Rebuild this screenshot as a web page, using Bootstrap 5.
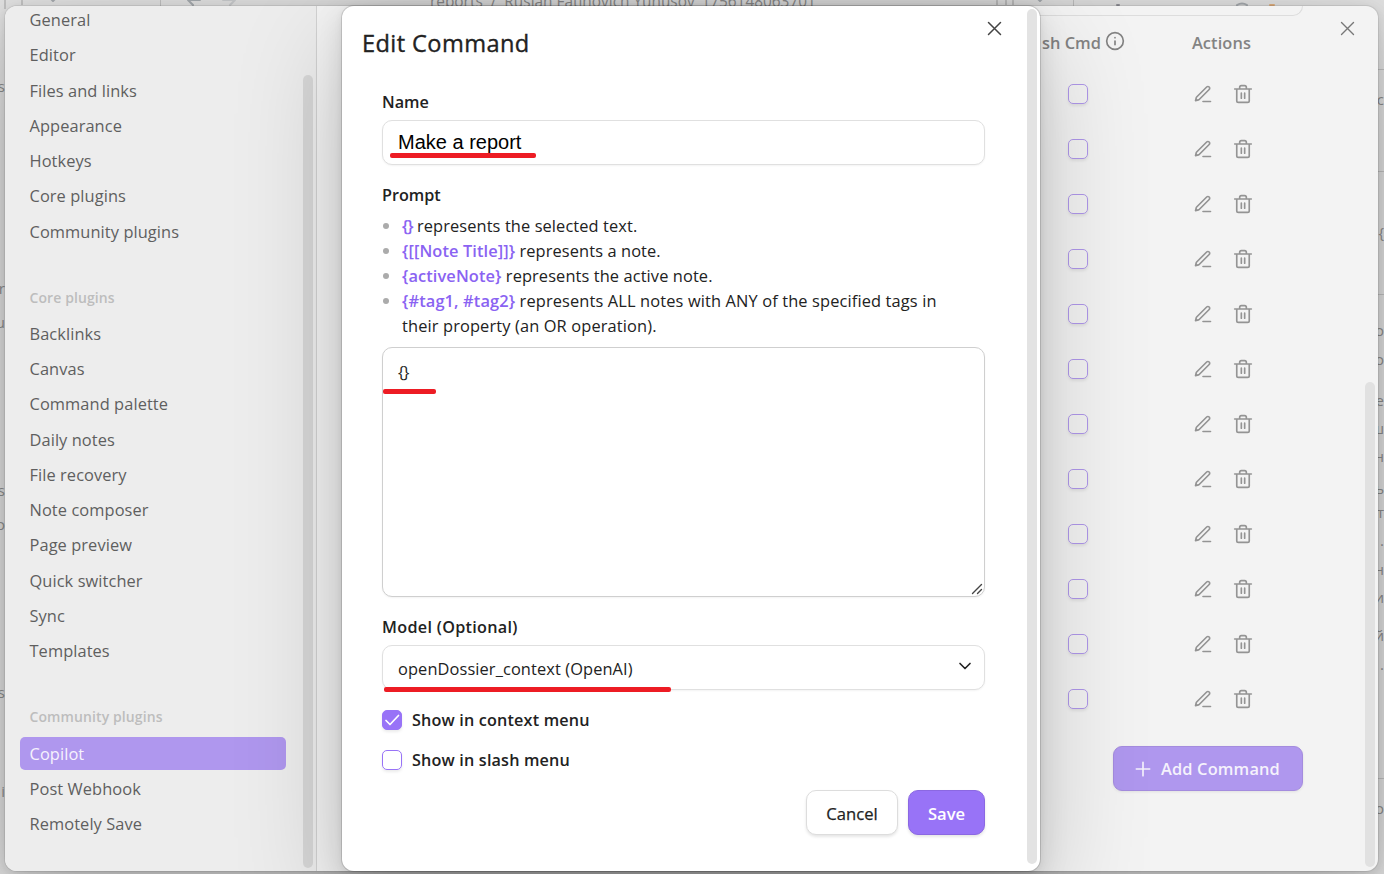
<!DOCTYPE html>
<html lang="en">
<head>
<meta charset="utf-8">
<title>Copilot settings</title>
<link href="https://cdn.jsdelivr.net/npm/bootstrap@5.3.0/dist/css/bootstrap.min.css" rel="stylesheet">
<style>
:root{--accent:#9873f7;--sh:0 2px 9px rgba(0,0,0,.071),0 8px 31px rgba(0,0,0,.112),0 37px 112px rgba(0,0,0,.2)}
body{width:1384px;height:874px;background:#e2e2e2;font-family:"Open Sans","Noto Sans",sans-serif;font-size:16.4px;line-height:25px;color:#222}
svg{display:block;fill:none;stroke:currentColor;stroke-width:2;stroke-linecap:round;stroke-linejoin:round}
.frag{position:absolute;line-height:20px;font-size:15px;color:#8e8e8e;white-space:nowrap;overflow:hidden}
.edge-l{left:0;width:5px;direction:rtl}.edge-r{left:1378px;width:6px;direction:rtl}
.rule{position:absolute;background:#c2c2c2}
.settings{position:absolute;left:5px;top:6px;width:1373px;height:865px;border-radius:12px;background:#f3f3f3;box-shadow:0 0 0 1px rgba(0,0,0,.07),var(--sh)}
.side{width:312px;background:#ededed;border-right:1px solid #d2d2d2;padding:0 30px 0 15px}
.side-list{margin-top:-3px}
.side-item{height:33px;margin-bottom:2.25px;padding:0 9.5px;line-height:33px;border-radius:5px;color:#5f5f5f;letter-spacing:.08px}
.side-item.on{background:#af97ee;color:#f6f2fd}
.side-head{height:67.2px;padding:28px 9.5px 0;line-height:40px;font-size:14px;font-weight:600;color:#bdbdbd;letter-spacing:.1px}
.bar{position:absolute;width:10px;border-radius:5px;background:rgba(0,0,0,.09)}
.cardend{position:absolute;left:1000px;top:0;width:298px;height:10px;border:1px solid #ddd;border-width:0 1px 1px 0;border-radius:0 0 10px 0}
.cmds{padding-left:725px;color:#838383}
.cmd-head{height:60px;padding-top:24px;font-weight:600}
.cmd-row{height:55px}
.cmd-row .box{margin-left:26px}
.cmd-row svg{color:#949494}
.cmd-row .pen{margin-left:105px;margin-right:20px}
.act{margin-left:67px;letter-spacing:.1px}
.box{width:20px;height:20px;border:1px solid var(--accent);border-radius:5px;box-shadow:0 2px 3px rgba(0,0,0,.08)}
.faded{border-color:#af97ea}
.add{width:190px;height:45px;margin:20px 0 0 71px;border-radius:9px;background:#af97ee;border:1px solid #a48cde;color:#f5f2fc;font-weight:600;box-shadow:0 1px 3px rgba(0,0,0,.08);padding:0 14px 0 19px;letter-spacing:.15px}
.edit{position:absolute;left:342px;top:6px;width:698px;height:865px;border-radius:12px;background:#fff;box-shadow:0 0 0 1px rgba(0,0,0,.13),var(--sh);padding:0 55px 0 40px}
.title{font-size:23.6px;font-weight:500;line-height:32px;padding-top:21px;margin:0 0 0 -20px;letter-spacing:.4px;-webkit-text-stroke:.35px #222}
.lbl{font-weight:600;font-size:16.2px;line-height:25px;letter-spacing:0}
.lbl.wide{letter-spacing:.3px}
.cl{margin-left:2px;letter-spacing:.17px}
.field{border:1px solid #e0e0e0;border-radius:10px;padding:0 15px;background:#fff;color:#222;font-size:16.4px;box-shadow:0 1px 2px rgba(0,0,0,.05)}
.name-in{height:45px;font-family:"Liberation Sans",sans-serif;font-size:20px;color:#000;margin-top:6px}
.hints{list-style:none;margin:0;padding:0 0 0 20px}
.hints li{position:relative;letter-spacing:.1px}
.hints li::before{content:"";position:absolute;left:-19px;top:10px;width:6px;height:6px;border-radius:50%;background:#ababab}
.hints b{font-weight:600;color:#8a63f2}
.brace{letter-spacing:-1px}
.area{height:250px;margin-top:9px;padding-top:11px;border-color:#cfcfcf;position:relative}
.model{letter-spacing:.1px;padding-top:1px}
.stroke-red{position:absolute;height:5px;border-radius:2px;background:#ed1c24}
.chk{background:var(--accent);color:#fff}
.btn-x{height:45px;border-radius:10px;border:1px solid #ddd;background:#fff;color:#222;-webkit-text-stroke:.25px #222;box-shadow:0 2px 3px rgba(0,0,0,.1);font-size:16.6px;padding:1px 0 0}
.btn-x.go{background:var(--accent);border-color:#8b68e2;color:#fff;font-weight:600;-webkit-text-stroke:0}
</style>
</head>
<body class="position-relative overflow-hidden">
<div class="rule" style="left:4px;top:0;width:2px;height:9px"></div><div class="rule" style="left:21px;top:0;width:2px;height:5px"></div>
<div class="rule" style="left:160px;top:0;width:1px;height:6px"></div><div class="rule" style="left:996px;top:0;width:2px;height:5px"></div>
<div class="rule" style="left:1005px;top:0;width:2px;height:5px"></div><div class="rule" style="left:1012px;top:0;width:2px;height:5px"></div><div class="rule" style="left:1073px;top:0;width:1px;height:6px"></div>
<svg class="position-absolute text-secondary opacity-50" style="left:0;top:0" width="1384" height="6"><path d="M51-1l2 2 2-2M200 0h-12l5 5M1038-1l2 2 2-2"/><path opacity=".4" d="M223 0h12l-5 5"/><path d="M1237 5q5-3 10 0"/><path d="M1270 5h4" stroke="#e08020"/><path d="M1117 5h2" stroke="#445"/></svg>
<div class="frag" style="left:430px;top:-8px;height:20px;font-size:15.4px">reports&nbsp; /&nbsp; Ruslan Fatihovich Yunusov_1756148063701</div>
<div class="frag edge-l" style="top:76px">s</div><div class="frag edge-l" style="top:278px">r</div><div class="frag edge-l" style="top:312px">u</div><div class="frag edge-l" style="top:480px">s</div><div class="frag edge-l" style="top:514px">o</div><div class="frag edge-l" style="top:682px">s</div><div class="frag edge-l" style="top:781px">i</div>
<div class="frag edge-r" style="top:89px">с</div><div class="frag edge-r" style="top:222px">}</div><div class="frag edge-r" style="top:320px">о</div><div class="frag edge-r" style="top:349px">о</div><div class="frag edge-r" style="top:390px">е</div><div class="frag edge-r" style="top:418px">ш</div><div class="frag edge-r" style="top:446px">н</div><div class="frag edge-r" style="top:478px">ь</div><div class="frag edge-r" style="top:502px">т</div><div class="frag edge-r" style="top:530px">.</div><div class="frag edge-r" style="top:559px">н</div><div class="frag edge-r" style="top:587px">и</div><div class="frag edge-r" style="top:625px">й</div><div class="frag edge-r" style="top:654px">.</div><div class="frag edge-r" style="top:798px">о</div>
<div class="rule" style="left:1378px;top:69px;width:6px;height:1px"></div><div class="rule" style="left:1378px;top:171px;width:6px;height:1px"></div><div class="rule" style="left:1378px;top:294px;width:6px;height:1px"></div><div class="rule" style="left:1378px;top:778px;width:6px;height:1px"></div>

<main class="settings d-flex overflow-hidden">
  <nav class="side flex-shrink-0"><div class="side-list"></div></nav>
  <section class="cmds flex-grow-1">
    <div class="cmd-head d-flex">
      <span>sh Cmd</span>
      <svg class="ms-1" style="margin-top:1px" width="20" height="20" viewBox="0 0 24 24"><circle cx="12" cy="12" r="10"/><path d="M12 16.500v-4.500M12 8h.01"/></svg>
      <span class="act">Actions</span>
    </div>
    <div id="rows"></div>
    <button class="add d-flex align-items-center"><svg width="20" height="20" viewBox="0 0 24 24" stroke-width="1.600"><path d="M4 12h16M12 4v16"/></svg><span class="flex-grow-1 text-center">Add Command</span></button>
  </section>
  <div class="cardend"></div>
  <svg class="position-absolute" style="left:1335px;top:15px;color:#777" width="15" height="15" viewBox="0 0 15 15"><path stroke-width="1.400" d="M1.500 1.500l12 12M13.500 1.500l-12 12"/></svg>
  <div class="bar" style="left:298px;top:69px;height:793px"></div>
  <div class="bar" style="left:1360px;top:376px;height:485px;background:#e1e1e1"></div>
</main>

<section class="edit">
  <h1 class="title">Edit Command</h1>
  <div class="lbl" style="margin-top:30px;padding-top:1px;margin-bottom:-1px">Name</div>
  <div class="field name-in d-flex align-items-center">Make a report</div>
  <div class="lbl" style="margin-top:18px;margin-bottom:5px">Prompt</div>
  <ul class="hints">
    <li><b class="brace">{}</b> represents the selected text.</li>
    <li><b>{[[Note Title]]}</b> represents a note.</li>
    <li><b>{activeNote}</b> represents the active note.</li>
    <li style="letter-spacing:.13px"><b>{#tag1, #tag2}</b> represents ALL notes with ANY of the specified tags in<br>their property (an OR operation).</li>
  </ul>
  <div class="field area"><span class="brace">{}</span><svg class="position-absolute" style="right:1px;bottom:1px;color:#444" width="12" height="12" viewBox="0 0 12 12"><path stroke-width="1.400" d="M1.500 10.500l9-9M6.500 10.500l4-4"/></svg></div>
  <div class="lbl wide" style="margin-top:18px;margin-bottom:-1px">Model (Optional)</div>
  <div class="field d-flex align-items-center justify-content-between" style="height:45px;margin-top:6px;padding-right:9px"><span class="model">openDossier_context (OpenAI)</span><svg style="margin-top:-3px" width="20" height="20" viewBox="0 0 24 24"><path d="M6 9l6 6 6-6"/></svg></div>
  <label class="d-flex align-items-center gap-2 lbl" style="height:20px;margin-top:20px"><span class="box chk"><svg width="18" height="18" viewBox="0 0 18 18"><path stroke-width="1.700" d="M3 9.500l4 4 8.500-9"/></svg></span><span class="cl">Show in context menu</span></label>
  <label class="d-flex align-items-center gap-2 lbl" style="height:20px;margin-top:20px"><span class="box"></span><span class="cl">Show in slash menu</span></label>
  <div class="d-flex justify-content-end" style="gap:10px;margin-top:20px"><button class="btn-x" style="width:92px">Cancel</button><button class="btn-x go" style="width:77px">Save</button></div>
  <svg class="position-absolute" style="left:645px;top:15px;color:#444" width="15" height="15" viewBox="0 0 15 15"><path stroke-width="1.500" d="M1.500 1.500l12 12M13.500 1.500l-12 12"/></svg>
  <div class="bar" style="left:685px;top:3px;height:855px;background:#e3e3e3"></div>
  <i class="stroke-red" style="left:48px;top:147px;width:146px"></i>
  <i class="stroke-red" style="left:41px;top:383px;width:53px"></i>
  <i class="stroke-red" style="left:42px;top:681px;width:287px"></i>
</section>
<script>
const groups=[[null,["General","Editor","Files and links","Appearance","Hotkeys","Core plugins","Community plugins"]],
["Core plugins",["Backlinks","Canvas","Command palette","Daily notes","File recovery","Note composer","Page preview","Quick switcher","Sync","Templates"]],
["Community plugins",["Copilot","Post Webhook","Remotely Save"]]];
document.querySelector('.side-list').innerHTML=groups.map(([h,a])=>(h?`<div class="side-head">${h}</div>`:'')+a.map(t=>`<div class="side-item${t=='Copilot'?' on':''}">${t}</div>`).join('')).join('');
document.getElementById('rows').innerHTML=`<div class="cmd-row d-flex align-items-center"><span class="box faded"></span>
<svg class="pen" width="20" height="20" viewBox="0 0 24 24"><path d="M12 21h9M16.400 3.600a2.100 2.100 0 0 1 3 3L7.400 18.600a2 2 0 0 1-.9.5L3 20l.9-3.500a2 2 0 0 1 .5-.9z"/></svg>
<svg width="20" height="20" viewBox="0 0 24 24"><path d="M2 6h20M19.500 6v14a2 2 0 0 1-2 2h-11a2 2 0 0 1-2-2V6M8 6V4a2 2 0 0 1 2-2h4a2 2 0 0 1 2 2v2M10 11v6M14 11v6"/></svg></div>`.repeat(12);
</script>
<script src="https://cdn.jsdelivr.net/npm/bootstrap@5.3.0/dist/js/bootstrap.bundle.min.js"></script>
</body>
</html>
